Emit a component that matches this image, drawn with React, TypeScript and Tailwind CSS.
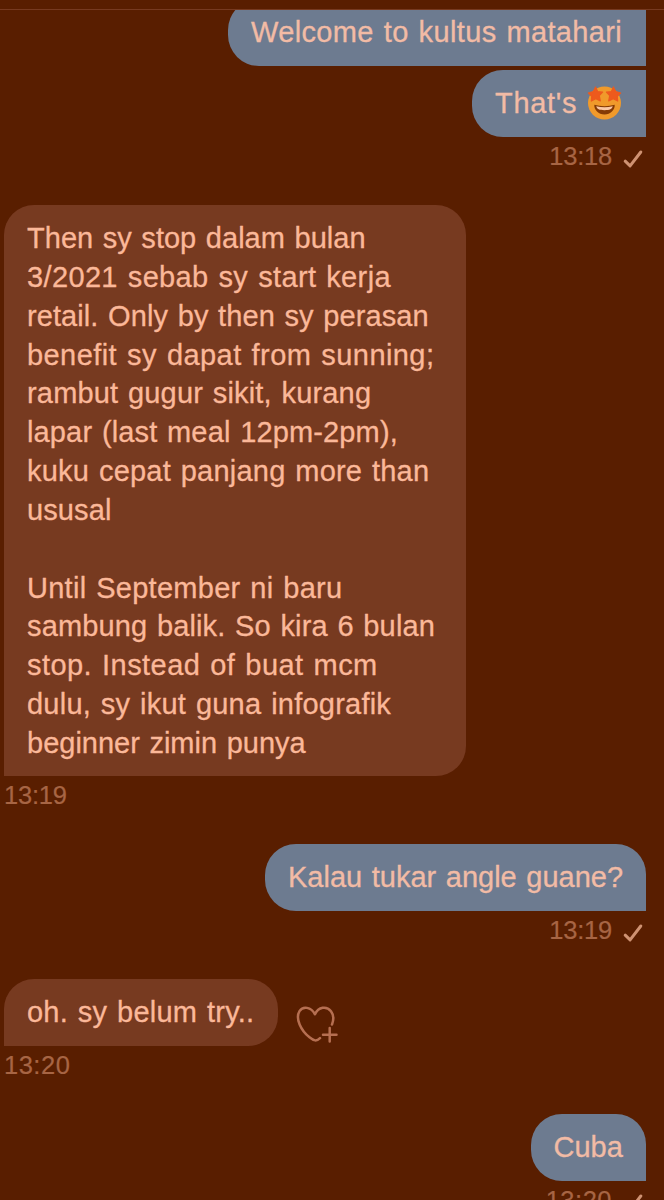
import type { ReactNode } from "react";

function Line({ children, className = "" }: { children: ReactNode; className?: string }) {
  return <span className={`block h-[38.85px] whitespace-pre ${className}`}>{children}</span>;
}

function Sent({ children, className }: { children: ReactNode; className: string }) {
  return (
    <div
      className={`h-[67px] shrink-0 self-end rounded-l-[31px] bg-[#6d7b90] pl-[23px] pt-[14px] text-[#f2bba5] ${className}`}
    >
      {children}
    </div>
  );
}

function Received({ children, className }: { children: ReactNode; className: string }) {
  return (
    <div
      className={`shrink-0 rounded-t-[30px] rounded-br-[30px] bg-[#773a20] pl-[23px] pt-[14px] text-[#fbb899] ${className}`}
    >
      {children}
    </div>
  );
}

function Check() {
  return (
    <svg className="ml-[10px] mr-[1.5px] mt-[11px] h-[22px] w-[22px]" viewBox="0 0 22 22" fill="none">
      <path d="M3.2 13.2 8.1 17.900 18.800 4" stroke="#cf9272" strokeWidth="3" strokeLinecap="round" strokeLinejoin="round" />
    </svg>
  );
}

function Time({ value, sent = false }: { value: string; sent?: boolean }) {
  return (
    <div
      className={`flex h-[68px] shrink-0 items-start text-[25.5px] leading-[39px] text-[#a76544] [-webkit-text-stroke:0.2px] ${sent ? "justify-end" : ""}`}
    >
      <span className={value === "13:20" ? "tracking-[0.5px]" : "tracking-[-0.2px]"}>{value}</span>
      {sent && <Check />}
    </div>
  );
}

function StarStruck() {
  return (
    <svg className="ml-[9.5px] mt-[1px] h-[35px] w-[35px]" viewBox="0 0 35 35">
      <circle cx="17.5" cy="18" r="16.5" fill="#f09a2b" />
      <path
        d="M8.600 2 10.600 6.500 15.600 7.200 12.300 10.700 13.300 15.900 8.800 13.700 4.300 16 4.700 11.400 1.400 8 6.200 6.700Z"
        fill="#ed5a1d"
        stroke="#ed5a1d"
        strokeWidth="1.200"
        strokeLinejoin="round"
      />
      <path
        d="M26.400 2 24.400 6.500 19.400 7.200 22.700 10.700 21.700 15.900 26.200 13.700 30.700 16 30.300 11.400 33.600 8 28.800 6.700Z"
        fill="#ed5a1d"
        stroke="#ed5a1d"
        strokeWidth="1.200"
        strokeLinejoin="round"
      />
      <path d="M7.300 19.800c6.300 1.900 14.100 1.900 20.400 0 .3 5.200-4.200 9.700-10.200 9.700S7 25 7.300 19.800Z" fill="#853b05" />
      <path d="M9.300 21.300c5.200 1.200 11.200 1.200 16.400 0-.6 2.900-3 3.900-8.200 3.900s-7.600-1-8.200-3.900Z" fill="#fac7a5" />
    </svg>
  );
}

function HeartPlus() {
  return (
    <svg className="ml-[17px] mt-[25px] h-[42px] w-[44px]" viewBox="0 0 44 42" fill="none" stroke="#b66f51" strokeWidth="2.5" strokeLinecap="round" strokeLinejoin="round">
      <path d="M37 20.500C38.800 16 38.700 11 36 7.300 31.500 1.500 23.500 2.800 20 10.300 16 2.800 8 1.700 4.500 7.200 0 14.500 6 26.500 14.500 33.300 19 37 21.500 37.500 25 34.200" />
      <path d="M34.700 24v13.500M28 30.700h13.500" />
    </svg>
  );
}

export default function App() {
  return (
    <main className="flex h-[1200px] w-[664px] flex-col overflow-hidden bg-[#591e00] font-['Liberation_Sans',Arial,sans-serif] text-[29px] leading-[38.85px] [word-spacing:1.5px] [-webkit-text-stroke:0.3px]">
      <div className="h-[10px] shrink-0 border-b border-[#773a20]" />
      <section className="flex min-h-0 flex-1 flex-col overflow-hidden pl-[4px] pr-[18.5px]">
        <Sent className="-mt-[11px] w-[417.5px]">
          <Line className="tracking-[0.36px]">Welcome to kultus matahari</Line>
        </Sent>
        <Sent className="mt-[4px] flex w-[173.5px]">
          <Line className="tracking-[0.7px]">That's</Line>
          <StarStruck />
        </Sent>
        <Time value="13:18" sent />
        <Received className="h-[571px] w-[462px]">
          <Line className="tracking-[0.02px]">Then sy stop dalam bulan</Line>
          <Line className="tracking-[0.36px]">3/2021 sebab sy start kerja</Line>
          <Line className="tracking-[0.08px]">retail. Only by then sy perasan</Line>
          <Line className="tracking-[0.43px]">benefit sy dapat from sunning;</Line>
          <Line className="tracking-[0.17px]">rambut gugur sikit, kurang</Line>
          <Line className="tracking-[0.14px]">lapar (last meal 12pm-2pm),</Line>
          <Line className="tracking-[0.22px]">kuku cepat panjang more than</Line>
          <Line className="tracking-[0.1px]">ususal</Line>
          <Line> </Line>
          <Line className="tracking-[0.27px]">Until September ni baru</Line>
          <Line className="tracking-[0.13px]">sambung balik. So kira 6 bulan</Line>
          <Line className="tracking-[0.44px]">stop. Instead of buat mcm</Line>
          <Line className="tracking-[0.23px]">dulu, sy ikut guna infografik</Line>
          <Line>beginner zimin punya</Line>
        </Received>
        <Time value="13:19" />
        <Sent className="w-[380.5px] rounded-tr-[30px]">
          <Line>Kalau tukar angle guane?</Line>
        </Sent>
        <Time value="13:19" sent />
        <div className="flex h-[67px] shrink-0">
          <Received className="h-[67px] w-[274px]">
            <Line className="tracking-[0.23px]">oh. sy belum try..</Line>
          </Received>
          <HeartPlus />
        </div>
        <Time value="13:20" />
        <Sent className="w-[115px] rounded-tr-[30px]">
          <Line>Cuba</Line>
        </Sent>
        <Time value="13:20" sent />
      </section>
    </main>
  );
}
